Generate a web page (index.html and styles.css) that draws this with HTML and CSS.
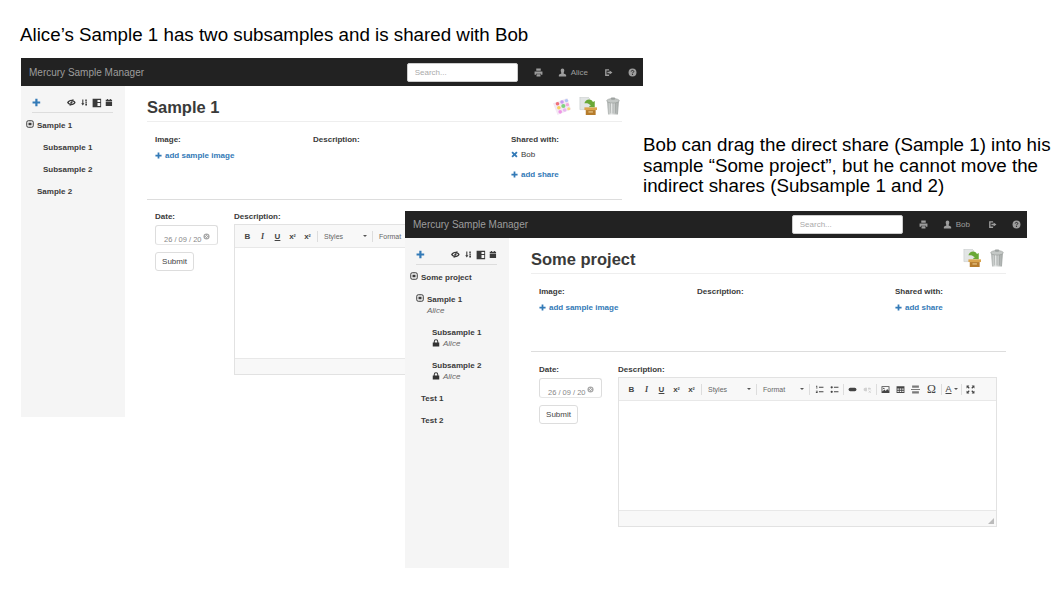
FILE: index.html
```html
<!DOCTYPE html>
<html lang="en">
<head>
  <meta charset="UTF-8">
  <meta name="viewport" content="width=device-width, initial-scale=1.0">
  <title>Mercury Sample Manager sharing</title>
  <link rel="stylesheet" href="styles.css">
</head>
<body>

  <!-- icon sprite -->
  <svg class="sprite" xmlns="http://www.w3.org/2000/svg">
    <defs>
      <linearGradient id="can" x1="0" x2="1" y1="0" y2="0">
        <stop offset="0" stop-color="#a3a8a6"/><stop offset=".35" stop-color="#e6e8e7"/><stop offset="1" stop-color="#9da2a0"/>
      </linearGradient>
    </defs>
    <symbol id="i-plus" viewBox="0 0 16 16"><path d="M6 1h4v5h5v4h-5v5H6v-5H1V6h5z"/></symbol>
    <symbol id="i-remove" viewBox="0 0 16 16"><path d="M4 1 8 5 12 1 15 4 11 8 15 12 12 15 8 11 4 15 1 12 5 8 1 4z"/></symbol>
    <symbol id="i-print" viewBox="0 0 16 16"><path d="M4 1h8v4H4zM1 6h14v6h-2.500v-2h-9v2H1zM4.500 11h7v4h-7z"/></symbol>
    <symbol id="i-user" viewBox="0 0 16 16"><path d="M8 1c2 0 3.200 1.500 3.200 3.500S10 8.500 10 9.500c0 1 4.500 1.500 4.500 3.500v2h-13v-2c0-2 4.500-2.500 4.500-3.500s-1.200-3-1.200-5S6 1 8 1z"/></symbol>
    <symbol id="i-logout" viewBox="0 0 16 16"><path d="M2 2h7v2.500H4.500v7H9V14H2zM10 4.500 15 8l-5 3.500V9.500H6v-3h4z"/></symbol>
    <symbol id="i-help" viewBox="0 0 16 16"><circle cx="8" cy="8" r="7"/><path d="M5.700 6.300C5.800 4.900 6.800 4.300 8 4.300c1.300 0 2.300.8 2.300 1.900 0 1.600-2.300 1.500-2.300 3.200" fill="none" stroke="#222" stroke-width="1.700"/><rect x="7" y="10.400" width="2" height="1.800" fill="#222"/></symbol>
    <symbol id="i-lock" viewBox="0 0 16 16"><path d="M1.500 7h2V5a4.500 4.500 0 0 1 9 0v2h2v8h-13zM5.500 7h5V5a2.500 2.500 0 0 0-5 0z"/></symbol>
    <symbol id="i-toggle" viewBox="0 0 16 16"><rect x="1.500" y="1.500" width="13" height="13" rx="3" fill="none" stroke="currentColor" stroke-width="2"/><rect x="5" y="5.500" width="6" height="5"/></symbol>
    <symbol id="i-eye" viewBox="0 0 16 16"><path d="M0 8c2-3.500 5-5 8-5s6 1.500 8 5c-2 3.500-5 5-8 5S2 11.500 0 8zM3 8c1 1.500 3 2.700 5 2.700S12 9.500 13 8c-1-1.500-3-2.700-5-2.700S4 6.500 3 8z"/><circle cx="8" cy="8" r="2"/><path d="M10.500 1.500 12 2.300 6 14.500 4.500 13.700z"/></symbol>
    <symbol id="i-sort" viewBox="0 0 16 16"><path d="M3 1h2.500v9H8L4.200 15 .5 10H3zM10 1h3.500v4H10zM10 6.500h5V8.500h-5zM10 10.500h5V15h-5z"/></symbol>
    <symbol id="i-book" viewBox="0 0 16 16"><path d="M1 1h14v14H1zM9 3v3.500h4.500V3zM9 8v5h4.500V8z" fill-rule="evenodd"/></symbol>
    <symbol id="i-cal" viewBox="0 0 16 16"><path d="M4 1h2v1.500h4V1h2v1.500h2.500V6h-13V2.500H4zM1.500 7h13v8h-13z"/></symbol>
    <symbol id="i-clear" viewBox="0 0 16 16"><circle cx="8" cy="8" r="7"/><path d="M5 5l6 6M11 5l-6 6" stroke="#fff" stroke-width="2"/></symbol>
    <symbol id="i-ol" viewBox="0 0 16 16"><path d="M7 3h8v2H7zM7 11h8v2H7zM2 1.500h2v5H2.700V3H2zM1.500 10H5v1.300L3 13h2v1H1.500v-1.200L3.500 11h-2z"/></symbol>
    <symbol id="i-ul" viewBox="0 0 16 16"><path d="M7 3h8v2H7zM7 11h8v2H7z"/><circle cx="3" cy="4" r="2"/><circle cx="3" cy="12" r="2"/></symbol>
    <symbol id="i-link" viewBox="0 0 16 16"><rect x="1" y="5" width="14" height="6" rx="3"/></symbol>
    <symbol id="i-unlink" viewBox="0 0 16 16"><path d="M1 8a3 3 0 0 1 3-3h3v6H4a3 3 0 0 1-3-3zM9 5h3a3 3 0 0 1 2 1v2H9z" opacity=".5"/><path d="M10 10l4 4M14 10l-4 4" stroke="currentColor" stroke-width="1.200" opacity=".6"/></symbol>
    <symbol id="i-image" viewBox="0 0 16 16"><path d="M1 2h14v12H1zM2.500 3.500v8L6 8l2.500 2.500L11 7l2.500 3V3.500z" fill-rule="evenodd"/><circle cx="5" cy="6" r="1.300"/></symbol>
    <symbol id="i-table" viewBox="0 0 16 16"><path d="M1 2h14v12H1zM2.500 6v2.500H5V6zM6.500 6v2.500h3V6zM11 6v2.500h2.500V6zM2.500 10v2.500H5V10zM6.500 10v2.500h3V10zM11 10v2.500h2.500V10z" fill-rule="evenodd"/></symbol>
    <symbol id="i-rule" viewBox="0 0 16 16"><path d="M2 1h12v4H2zM0 7h16v2H0zM2 11h12v4H2z" opacity=".7"/></symbol>
    <symbol id="i-max" viewBox="0 0 16 16"><path d="M1 1h5L4.300 2.700 6.500 5 5 6.500 2.700 4.300 1 6zM15 1v5l-1.700-1.700L11 6.500 9.500 5l2.200-2.300L10 1zM1 15v-5l1.700 1.700L5 9.500 6.500 11l-2.200 2.300L6 15zM15 15h-5l1.700-1.700L9.500 11 11 9.500l2.300 2.200L15 10z"/></symbol>
    <symbol id="i-tile" viewBox="0 0 20 20">
      <path d="M0 7 16 1 20 14 5 20z" fill="#f3e9f3"/>
      <circle cx="5" cy="7.500" r="2" fill="#f0707a"/><circle cx="10" cy="5.500" r="2" fill="#c69af0"/><circle cx="15" cy="4" r="1.900" fill="#b4c6f5"/>
      <circle cx="6.500" cy="12" r="2" fill="#f5d25e"/><circle cx="11.500" cy="10" r="2.300" fill="#7fd27f"/><circle cx="16" cy="8.500" r="1.900" fill="#f3a8dd"/>
      <circle cx="8" cy="16.500" r="2" fill="#ef96e6"/><circle cx="13" cy="14.500" r="2" fill="#e9b6f0"/><circle cx="17.500" cy="13" r="1.700" fill="#f6dd80"/>
    </symbol>
    <symbol id="i-move" viewBox="0 0 20 20">
      <path d="M1 0h9l2 2v12H1z" fill="#e2e5e5" stroke="#c4c8c8" stroke-width=".6"/>
      <path d="M6 11.500h14V14.500H6z" fill="#dba54d"/><path d="M7.500 14.500h11V20h-11z" fill="#b67c2c"/><path d="M10.500 16h5v1.200h-5z" fill="#eccf94"/>
      <path d="M6 7C7 2.500 13 1 15.500 5.500L17.500 4.500V11.500L11 11l2-1.800C11 7 8.500 6.500 6 7z" fill="#69a836"/>
    </symbol>
    <symbol id="i-trash" viewBox="0 0 20 20">
      <path d="M3.500 5h13l-1 14.500h-11z" fill="url(#can)"/>
      <path d="M6.500 6h1l.4 12h-.8zM9.500 6h1v12h-1zM12.500 6h1l-.4 12h-.8z" fill="#7d8280" opacity=".45"/>
      <ellipse cx="10" cy="4.200" rx="7" ry="2.500" fill="#c4c8c6" stroke="#8f9492" stroke-width=".6"/><rect x="7.500" y="0.500" width="5" height="2.500" rx="1.200" fill="#9da2a0"/>
    </symbol>
  </svg>

  <p class="note note-top">Alice’s Sample 1 has two subsamples and is shared with Bob</p>

  <!-- Alice's window -->
  <section class="window window-alice">
    <header class="navbar">
      <span class="brand">Mercury Sample Manager</span>
      <div class="nav-right">
        <input class="search" type="text" placeholder="Search...">
        <svg class="nav-icon nav-print"><use href="#i-print"/></svg>
        <svg class="nav-icon nav-user"><use href="#i-user"/></svg>
        <span class="nav-name">Alice</span>
        <svg class="nav-icon nav-out"><use href="#i-logout"/></svg>
        <svg class="nav-icon nav-help"><use href="#i-help"/></svg>
      </div>
    </header>
    <div class="main">
      <aside class="sidebar">
        <div class="side-tools">
          <svg class="side-add"><use href="#i-plus"/></svg>
          <svg class="side-tool side-eye"><use href="#i-eye"/></svg>
          <svg class="side-tool side-sort"><use href="#i-sort"/></svg>
          <svg class="side-tool side-book"><use href="#i-book"/></svg>
          <svg class="side-tool side-cal"><use href="#i-cal"/></svg>
        </div>
        <div class="node level-1"><svg class="toggle"><use href="#i-toggle"/></svg>Sample 1</div>
        <div class="node level-2">Subsample 1</div>
        <div class="node level-2">Subsample 2</div>
        <div class="node level-1">Sample 2</div>
      </aside>
      <div class="content">
        <div class="title-row">
          <h1>Sample 1</h1>
          <div class="actions">
            <svg class="action"><use href="#i-tile"/></svg>
            <svg class="action"><use href="#i-move"/></svg>
            <svg class="action"><use href="#i-trash"/></svg>
          </div>
        </div>
        <div class="info">
          <div>
            <div class="label">Image:</div>
            <a class="link"><svg class="link-icon"><use href="#i-plus"/></svg>add sample image</a>
          </div>
          <div class="label">Description:</div>
          <div>
            <div class="label">Shared with:</div>
            <div class="share"><svg class="link-icon"><use href="#i-remove"/></svg>Bob</div>
            <a class="link"><svg class="link-icon"><use href="#i-plus"/></svg>add share</a>
          </div>
        </div>
        <div class="form">
          <div class="form-side">
            <div class="label">Date:</div>
            <div class="date"><span>26 / 09 / 20</span><svg class="clear"><use href="#i-clear"/></svg></div>
            <button class="submit" type="button">Submit</button>
          </div>
          <div class="form-main">
            <div class="label">Description:</div>
            <div class="editor">
              <div class="toolbar">
                <span class="tool tool-b">B</span>
                <span class="tool tool-i">I</span>
                <span class="tool tool-u">U</span>
                <span class="tool tool-s">x<sub>2</sub></span>
                <span class="tool tool-s">x<sup>2</sup></span>
                <span class="sep"></span>
                <span class="combo">Styles<i class="caret"></i></span>
                <span class="sep"></span>
                <span class="combo combo-format">Format<i class="caret"></i></span>
              </div>
              <div class="editor-body"></div>
              <div class="editor-foot"></div>
            </div>
          </div>
        </div>
      </div>
    </div>
  </section>

  <p class="note note-side">Bob can drag the direct share (Sample 1) into his<br>sample “Some project”, but he cannot move the<br>indirect shares (Subsample 1 and 2)</p>

  <!-- Bob's window -->
  <section class="window window-bob">
    <header class="navbar">
      <span class="brand">Mercury Sample Manager</span>
      <div class="nav-right">
        <input class="search" type="text" placeholder="Search...">
        <svg class="nav-icon nav-print"><use href="#i-print"/></svg>
        <svg class="nav-icon nav-user"><use href="#i-user"/></svg>
        <span class="nav-name">Bob</span>
        <svg class="nav-icon nav-out"><use href="#i-logout"/></svg>
        <svg class="nav-icon nav-help"><use href="#i-help"/></svg>
      </div>
    </header>
    <div class="main">
      <aside class="sidebar">
        <div class="side-tools">
          <svg class="side-add"><use href="#i-plus"/></svg>
          <svg class="side-tool side-eye"><use href="#i-eye"/></svg>
          <svg class="side-tool side-sort"><use href="#i-sort"/></svg>
          <svg class="side-tool side-book"><use href="#i-book"/></svg>
          <svg class="side-tool side-cal"><use href="#i-cal"/></svg>
        </div>
        <div class="node level-1"><svg class="toggle"><use href="#i-toggle"/></svg>Some project</div>
        <div class="node level-2"><svg class="toggle"><use href="#i-toggle"/></svg>Sample 1
          <div class="owner">Alice</div>
        </div>
        <div class="node level-3">Subsample 1
          <div class="owner"><svg class="lock"><use href="#i-lock"/></svg>Alice</div>
        </div>
        <div class="node level-3">Subsample 2
          <div class="owner"><svg class="lock"><use href="#i-lock"/></svg>Alice</div>
        </div>
        <div class="node level-1">Test 1</div>
        <div class="node level-1">Test 2</div>
      </aside>
      <div class="content">
        <div class="title-row">
          <h1>Some project</h1>
          <div class="actions">
            <svg class="action"><use href="#i-move"/></svg>
            <svg class="action"><use href="#i-trash"/></svg>
          </div>
        </div>
        <div class="info">
          <div>
            <div class="label">Image:</div>
            <a class="link"><svg class="link-icon"><use href="#i-plus"/></svg>add sample image</a>
          </div>
          <div class="label">Description:</div>
          <div>
            <div class="label">Shared with:</div>
            <a class="link"><svg class="link-icon"><use href="#i-plus"/></svg>add share</a>
          </div>
        </div>
        <div class="form">
          <div class="form-side">
            <div class="label">Date:</div>
            <div class="date"><span>26 / 09 / 20</span><svg class="clear"><use href="#i-clear"/></svg></div>
            <button class="submit" type="button">Submit</button>
          </div>
          <div class="form-main">
            <div class="label">Description:</div>
            <div class="editor">
              <div class="toolbar">
                <span class="tool tool-b">B</span>
                <span class="tool tool-i">I</span>
                <span class="tool tool-u">U</span>
                <span class="tool tool-s">x<sub>2</sub></span>
                <span class="tool tool-s">x<sup>2</sup></span>
                <span class="sep"></span>
                <span class="combo">Styles<i class="caret"></i></span>
                <span class="sep"></span>
                <span class="combo combo-format">Format<i class="caret"></i></span>
                <span class="sep"></span>
                <span class="tool"><svg class="tool-icon"><use href="#i-ol"/></svg></span>
                <span class="tool"><svg class="tool-icon"><use href="#i-ul"/></svg></span>
                <span class="sep sep-tight"></span>
                <span class="tool"><svg class="tool-icon"><use href="#i-link"/></svg></span>
                <span class="tool tool-off"><svg class="tool-icon"><use href="#i-unlink"/></svg></span>
                <span class="sep sep-tight"></span>
                <span class="tool"><svg class="tool-icon"><use href="#i-image"/></svg></span>
                <span class="tool"><svg class="tool-icon"><use href="#i-table"/></svg></span>
                <span class="tool"><svg class="tool-icon"><use href="#i-rule"/></svg></span>
                <span class="tool tool-omega">Ω</span>
                <span class="sep sep-tight"></span>
                <span class="tool tool-color"><u>A</u><i class="caret"></i></span>
                <span class="sep sep-tight"></span>
                <span class="tool"><svg class="tool-icon"><use href="#i-max"/></svg></span>
              </div>
              <div class="editor-body"></div>
              <div class="editor-foot"><i class="grip"></i></div>
            </div>
          </div>
        </div>
      </div>
    </div>
  </section>

</body>
</html>
```

FILE: styles.css
```css
html, body {
  margin: 0;
  padding: 0;
}

body {
  position: relative;
  width: 1058px;
  height: 595px;
  overflow: hidden;
  background-color: #fff;
  font-family: "Liberation Sans", Arial, sans-serif;
  color: #3a3a3a;
}

.sprite {
  position: absolute;
  width: 0;
  height: 0;
}

svg {
  fill: currentColor;
}

/* slide captions */
.note {
  position: absolute;
  margin: 0;
  color: #000;
  font-size: 18.750px;
  line-height: 20.500px;
  white-space: nowrap;
}

.note-top {
  left: 20px;
  top: 25px;
}

.note-side {
  left: 643px;
  top: 135px;
}

/* the two app windows sit free on the slide */
.window {
  position: absolute;
  width: 622px;
  background-color: #fff;
  display: flex;
  flex-direction: column;
}

.window-alice {
  left: 21px;
  top: 58px;
  height: 359px;
  overflow: hidden;
}

.window-bob {
  left: 405px;
  top: 211px;
  height: 357px;
}

.navbar {
  height: 28px;
  flex: none;
  background-color: #222;
  display: flex;
  align-items: center;
  justify-content: space-between;
  padding: 0 6px 0 8px;
  color: #9d9d9d;
}

.window-bob .navbar {
  height: 27px;
}

.brand {
  font-size: 10px;
}

.nav-right {
  display: flex;
  align-items: center;
}

.search {
  width: 111px;
  height: 19px;
  box-sizing: border-box;
  margin-right: 16px;
  padding: 0 7px;
  border: 1px solid #ccc;
  border-radius: 2px;
  background-color: #fff;
  font-family: inherit;
  font-size: 8px;
}

.search::placeholder {
  color: #aaa;
}

.nav-icon {
  width: 9px;
  height: 9px;
}

.nav-user {
  margin-left: 15px;
}

.nav-name {
  margin-left: 4px;
  font-size: 8px;
}

.window-bob .nav-name {
  margin-right: 2px;
}

.nav-out {
  margin-left: 16px;
}

.nav-help {
  margin-left: 15px;
}

.main {
  flex: 1;
  display: flex;
  min-height: 0;
}

.sidebar {
  width: 104px;
  flex: none;
  background-color: #f5f5f5;
  padding-top: 11px;
  box-sizing: border-box;
}

.side-tools {
  display: flex;
  align-items: center;
  margin: 0 12px 7px 11px;
  padding-bottom: 4px;
  height: 11px;
  border-bottom: 1px solid #ddd;
}

.side-add {
  width: 9px;
  height: 9px;
  color: #337ab7;
  margin-right: 22px;
}

.side-tool {
  width: 8px;
  height: 9px;
}

.side-eye {
  width: 9px;
  margin-left: 4px;
}

.side-sort {
  width: 7px;
  margin-left: 5px;
}

.side-book {
  width: 10px;
  height: 10px;
  margin-left: 5px;
}

.side-cal {
  margin-left: 3px;
}

.node {
  font-size: 8px;
  font-weight: bold;
  line-height: 11px;
  margin-bottom: 11px;
  white-space: nowrap;
}

.level-1 {
  padding-left: 16px;
}

.level-2 {
  padding-left: 22px;
}

.level-3 {
  padding-left: 27px;
}

.toggle {
  width: 8px;
  height: 8px;
  margin-left: -11px;
  margin-right: 3px;
  vertical-align: 0;
}

.owner {
  font-weight: normal;
  font-style: italic;
  color: #666;
  display: flex;
  align-items: center;
}

.lock {
  width: 8px;
  height: 8px;
  margin-right: 3px;
  color: #333;
  margin-top: -2px;
}

.content {
  flex: 1;
  min-width: 0;
  padding: 0 21px 0 22px;
}

.title-row {
  height: 35px;
  border-bottom: 1px solid #eee;
  display: flex;
  align-items: center;
  justify-content: space-between;
}

h1 {
  margin: 0;
  padding-top: 7px;
  font-size: 16.500px;
  font-weight: bold;
}

.actions {
  display: flex;
  gap: 7.500px;
  padding-top: 4px;
}

.action {
  width: 18px;
  height: 18px;
}

.info {
  display: grid;
  grid-template-columns: 158px 198px 1fr;
  height: 65px;
  padding: 12px 0 0 8px;
  border-bottom: 1px solid #ddd;
}

.label {
  font-size: 8px;
  font-weight: bold;
  line-height: 11px;
}

.link {
  display: block;
  margin-top: 5px;
  font-size: 8px;
  font-weight: bold;
  line-height: 11px;
  color: #337ab7;
}

.link-icon {
  width: 7px;
  height: 7px;
  margin-right: 3px;
  vertical-align: -1px;
}

.share {
  margin: 4px 0 9px;
  font-size: 8px;
  line-height: 11px;
}

.share .link-icon {
  color: #337ab7;
}

.form {
  display: flex;
  padding: 11px 0 0 8px;
}

.window-bob .form {
  padding-top: 12px;
}

.form-side {
  width: 79px;
  flex: none;
}

.form-main {
  width: 379px;
  flex: none;
}

.date {
  width: 63px;
  height: 20px;
  box-sizing: border-box;
  margin-top: 3px;
  padding: 9px 0 0 8px;
  border: 1px solid #ddd;
  border-bottom-color: #e6e6e6;
  border-radius: 3px;
  color: #888;
  font-size: 7.500px;
  line-height: 9px;
  display: flex;
  white-space: nowrap;
}

.clear {
  width: 7px;
  height: 7px;
  margin: -2px 0 0 1px;
  color: #aaa;
}

.submit {
  display: block;
  width: 39px;
  height: 19px;
  margin-top: 7px;
  padding: 0;
  border: 1px solid #ddd;
  border-radius: 3px;
  background-color: #fff;
  color: #444;
  font-family: inherit;
  font-size: 8px;
}

.editor {
  margin-top: 2px;
  height: 151px;
  border: 1px solid #e2e2e2;
  box-sizing: border-box;
  display: flex;
  flex-direction: column;
}

.window-bob .editor {
  height: 150px;
}

.toolbar {
  height: 23px;
  flex: none;
  box-sizing: border-box;
  background-color: #f8f8f8;
  border-bottom: 1px solid #e8e8e8;
  display: flex;
  align-items: center;
  padding-left: 5px;
  white-space: nowrap;
}

.tool {
  width: 15px;
  flex: none;
  text-align: center;
  font-size: 8px;
  color: #444;
  display: flex;
  align-items: center;
  justify-content: center;
}

.tool-b, .tool-i, .tool-u, .tool-s {
  font-weight: bold;
}

.tool-i {
  font-style: italic;
  font-family: "Liberation Serif", serif;
}

.tool-u {
  text-decoration: underline;
}

.tool sub, .tool sup {
  font-size: 4px;
  line-height: 0;
}

.tool-icon {
  width: 9px;
  height: 9px;
}

.tool-off {
  color: #aaa;
}

.tool-omega {
  width: 17px;
  font-family: "Liberation Serif", serif;
  font-size: 12px;
}

.tool-color {
  width: 17px;
  font-size: 9px;
}

.sep {
  width: 1px;
  height: 11px;
  margin: 0 2px;
  flex: none;
  background-color: #ddd;
}

.sep-tight {
  margin: 0 1px;
}

.combo {
  width: 50px;
  flex: none;
  box-sizing: border-box;
  padding: 0 3px 0 4px;
  display: flex;
  align-items: center;
  justify-content: space-between;
  font-size: 7px;
  color: #666;
}

.combo-format {
  width: 48px;
}

.caret {
  width: 0;
  height: 0;
  border-left: 2px solid transparent;
  border-right: 2px solid transparent;
  border-top: 2px solid #555;
}

.tool-color .caret {
  margin-left: 2px;
}

.editor-body {
  flex: 1;
  background-color: #fff;
}

.editor-foot {
  height: 16px;
  flex: none;
  background-color: #f8f8f8;
  border-top: 1px solid #e8e8e8;
  box-sizing: border-box;
  display: flex;
  justify-content: flex-end;
  align-items: flex-end;
}

.grip {
  width: 0;
  height: 0;
  margin: 0 2px 2px 0;
  border-left: 6px solid transparent;
  border-bottom: 6px solid #bbb;
}
```
